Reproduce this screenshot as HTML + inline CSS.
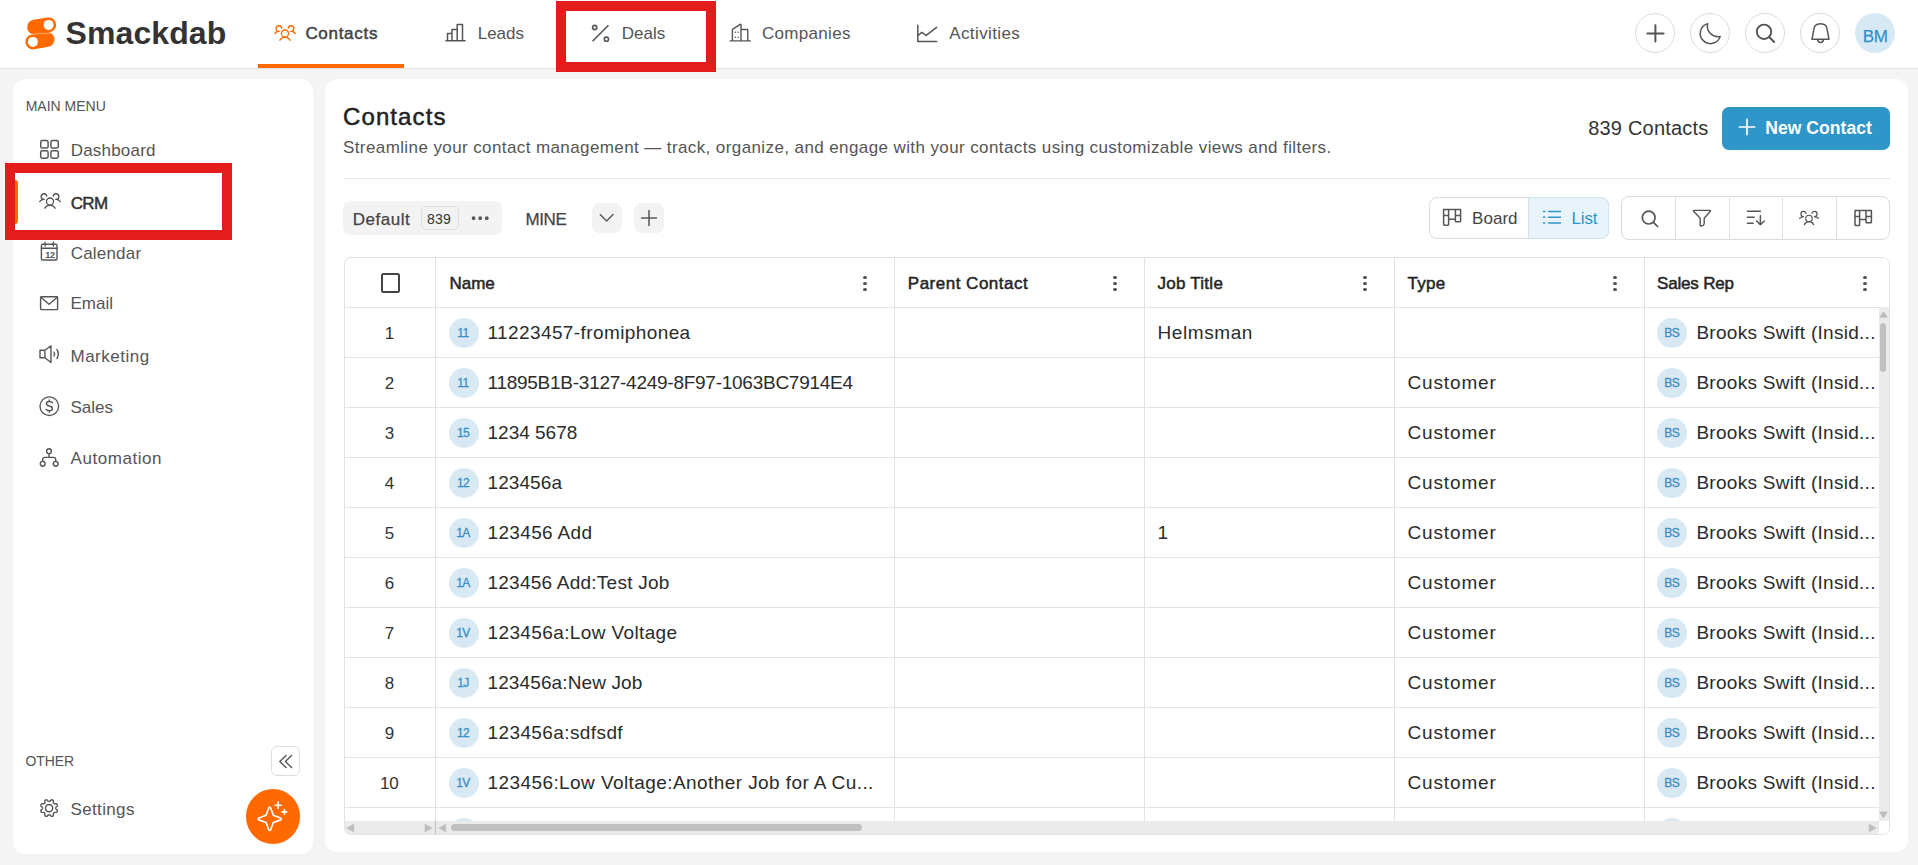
<!DOCTYPE html>
<html><head><meta charset="utf-8">
<style>
*{box-sizing:border-box;margin:0;padding:0}
html,body{width:1918px;height:865px;overflow:hidden;background:#f4f4f4;font-family:"Liberation Sans",sans-serif;color:#333}
.a{position:absolute}
.t{position:absolute;white-space:nowrap;line-height:1}
svg{position:absolute;overflow:visible}
.ic{fill:none;stroke:#555;stroke-width:1.6;stroke-linecap:round;stroke-linejoin:round}
</style></head><body>
<div class="a" style="left:0px;top:0px;width:1918px;height:68px;background:#fff;"></div>
<div class="a" style="left:0px;top:68px;width:1918px;height:1px;background:#e3e3e3;"></div>
<svg class="" style="left:20px;top:12px;" width="44" height="42" viewBox="0 0 44 42"><g stroke="#ff6a00" stroke-width="15" stroke-linecap="round" fill="none"><line x1="14.6" y1="15.2" x2="28.6" y2="12.9"/><line x1="12.9" y1="29.9" x2="27.0" y2="27.4"/></g><circle cx="28.6" cy="12.9" r="5" fill="#fff"/><circle cx="12.9" cy="29.9" r="5" fill="#fff"/><path d="M9 22.6 Q20 21.2 31 21.2" stroke="#fff" stroke-width="0.7" fill="none" opacity="0.6"/></svg>
<div class="t" style="left:65.50px;top:17.31px;font-size:32px;color:#333;font-weight:bold;letter-spacing:0.1px;">Smackdab</div>
<svg class="ic" style="left:273.5px;top:24px;stroke:#ff6a00;stroke-width:15" width="22" height="18" viewBox="4 44 248 180"><circle cx="128" cy="140" r="40"/><path d="M196,116a59.8,59.8,0,0,1,48,24"/><path d="M12,140a59.8,59.8,0,0,1,48-24"/><path d="M70.4,216a64.07,64.07,0,0,1,115.2,0"/><path d="M60,116A32,32,0,1,1,91.4,78"/><path d="M164.6,78A32,32,0,1,1,196,116"/></svg>
<div class="t" style="left:305.40px;top:25.41px;font-size:17px;color:#444;-webkit-text-stroke:0.5px #444;letter-spacing:0.7px;">Contacts</div>
<div class="a" style="left:258px;top:64px;width:146px;height:4px;background:#ff6a00;"></div>
<svg class="ic" style="left:444px;top:22px;stroke-width:1.5" width="22" height="20" viewBox="0 0 22 20"><path d="M2 18.8H21 M3.5 18.8V11.5H8 M8 18.8V7.5H13.2 M13.2 18.8V2.5H18.5V18.8"/></svg>
<div class="t" style="left:477.70px;top:25.41px;font-size:17px;color:#555;">Leads</div>
<svg class="ic" style="left:590px;top:23px;stroke-width:1.6" width="22" height="22" viewBox="0 0 22 22"><line x1="18" y1="2.8" x2="3" y2="17.8"/><circle cx="4.7" cy="4.5" r="2.1"/><circle cx="16.4" cy="16.2" r="2.1"/></svg>
<div class="t" style="left:621.80px;top:25.41px;font-size:17px;color:#555;">Deals</div>
<svg class="ic" style="left:728px;top:22px;stroke-width:1.4" width="24" height="22" viewBox="0 0 24 22"><path d="M2.2 18.9H22.4 M4.4 18.9V7.4L12.2 2.3Q13 2 13 3V18.9 M13 7.5H19.2Q19.8 7.5 19.8 8.2V18.9"/><g fill="#555" stroke="none"><circle cx="7.4" cy="10.3" r="0.75"/><circle cx="10.2" cy="10.3" r="0.75"/><circle cx="7.4" cy="15.3" r="0.75"/><circle cx="10.2" cy="15.3" r="0.75"/></g></svg>
<div class="t" style="left:762.00px;top:25.41px;font-size:17px;color:#555;letter-spacing:0.3px;">Companies</div>
<svg class="ic" style="left:915px;top:23px;stroke-width:1.5" width="24" height="21" viewBox="0 0 24 21"><path d="M2.8 2.2V18.4H21.6 M2.8 12.8L6.8 9.4L11.2 12.4L21.6 4.4"/></svg>
<div class="t" style="left:949.20px;top:25.41px;font-size:17px;color:#555;letter-spacing:0.4px;">Activities</div>
<div class="a" style="left:556px;top:1px;width:160px;height:71px;background:none;border:10px solid #e31c1c"></div>
<div class="a" style="left:1635px;top:13px;width:40px;height:40px;background:#fff;border:1px solid #dcdcdc;border-radius:50%"></div>
<div class="a" style="left:1690px;top:13px;width:40px;height:40px;background:#fff;border:1px solid #dcdcdc;border-radius:50%"></div>
<div class="a" style="left:1745px;top:13px;width:40px;height:40px;background:#fff;border:1px solid #dcdcdc;border-radius:50%"></div>
<div class="a" style="left:1800px;top:13px;width:40px;height:40px;background:#fff;border:1px solid #dcdcdc;border-radius:50%"></div>
<svg class="ic" style="left:0px;top:0px;stroke-width:2;width:1px;height:1px" width="1" height="1" viewBox="0 0 1 1"><path d="M1655.4 25.3V41.6 M1647.3 33.4H1663.6"/></svg>
<svg class="ic" style="left:0px;top:0px;stroke-width:1.5;width:1px;height:1px" width="1" height="1" viewBox="0 0 1 1"><path d="M1707.6 23.6A10.2 10.2 0 1 0 1720.2 36.4A10.7 10.7 0 0 1 1707.6 23.6Z"/></svg>
<svg class="ic" style="left:0px;top:0px;stroke-width:1.9;width:1px;height:1px" width="1" height="1" viewBox="0 0 1 1"><circle cx="1764" cy="31.8" r="7.2"/><path d="M1769.2 37L1774.2 42"/></svg>
<svg class="ic" style="left:0px;top:0px;stroke-width:1.5;width:1px;height:1px" width="1" height="1" viewBox="0 0 1 1"><path d="M1812 39.2L1813.6 31Q1813.6 23.8 1820.5 23.8Q1827.4 23.8 1827.4 31L1829 39.2Z M1817.6 39.6A2.9 2.9 0 0 0 1823.4 39.6"/></svg>
<div class="a" style="left:1855px;top:13px;width:40px;height:40px;background:#d7e9f4;border-radius:50%"></div>
<div class="t" style="left:1862.80px;top:27.61px;font-size:17px;color:#2f90c9;-webkit-text-stroke:0.25px #2f90c9;letter-spacing:-0.4px;">BM</div>
<div class="a" style="left:13px;top:79px;width:300px;height:775px;background:#fff;border-radius:12px"></div>
<div class="t" style="left:25.70px;top:99.15px;font-size:14px;color:#555;letter-spacing:0.0px;">MAIN MENU</div>
<svg class="ic" style="left:0px;top:0px;stroke-width:1.5;width:1px;height:1px" width="1" height="1" viewBox="0 0 1 1"><rect x="40.7" y="140.6" width="7.4" height="7.4" rx="1.6"/><rect x="50.9" y="140.6" width="7.4" height="7.4" rx="1.6"/><rect x="40.7" y="150.8" width="7.4" height="7.4" rx="1.6"/><rect x="50.9" y="150.8" width="7.4" height="7.4" rx="1.6"/></svg>
<div class="t" style="left:70.70px;top:142.31px;font-size:17px;color:#555;letter-spacing:0.2px;">Dashboard</div>
<svg class="ic" style="left:38.5px;top:192px;stroke:#555;stroke-width:15" width="22" height="18" viewBox="4 44 248 180"><circle cx="128" cy="140" r="40"/><path d="M196,116a59.8,59.8,0,0,1,48,24"/><path d="M12,140a59.8,59.8,0,0,1,48-24"/><path d="M70.4,216a64.07,64.07,0,0,1,115.2,0"/><path d="M60,116A32,32,0,1,1,91.4,78"/><path d="M164.6,78A32,32,0,1,1,196,116"/></svg>
<div class="a" style="left:13px;top:180px;width:5px;height:44px;background:#ff6a00;border-radius:0 3px 3px 0"></div>
<div class="t" style="left:70.70px;top:195.21px;font-size:17px;color:#333;-webkit-text-stroke:0.5px #333;letter-spacing:-0.6px;">CRM</div>
<svg class="ic" style="left:0px;top:0px;stroke-width:1.4;width:1px;height:1px" width="1" height="1" viewBox="0 0 1 1"><rect x="41.4" y="244.2" width="15.6" height="15.8" rx="1.2"/><path d="M41.4 248.2H57 M45.1 242.3V246 M53.3 242.3V246"/></svg>
<div class="t" style="left:45.30px;top:250.58px;font-size:9px;color:#555;font-weight:bold;letter-spacing:-0.3px;">12</div>
<div class="t" style="left:70.70px;top:244.61px;font-size:17px;color:#555;letter-spacing:0.2px;">Calendar</div>
<svg class="ic" style="left:0px;top:0px;stroke-width:1.4;width:1px;height:1px" width="1" height="1" viewBox="0 0 1 1"><rect x="40.6" y="296.8" width="17" height="12.8" rx="0.8"/><path d="M40.9 297.2L49.1 304.3L57.3 297.2"/></svg>
<div class="t" style="left:70.50px;top:295.21px;font-size:17px;color:#555;">Email</div>
<svg class="ic" style="left:0px;top:0px;stroke-width:1.4;width:1px;height:1px" width="1" height="1" viewBox="0 0 1 1"><path d="M40 350.3H44.9L51 345.8V362.5L44.9 357.7H40Z M44.9 350.3V357.7"/><path d="M54 352.2Q55.2 354 54 355.9 M57 349.6Q59.6 354 57 358.6"/></svg>
<div class="t" style="left:70.50px;top:347.71px;font-size:17px;color:#555;letter-spacing:0.5px;">Marketing</div>
<svg class="ic" style="left:0px;top:0px;stroke-width:1.4;width:1px;height:1px" width="1" height="1" viewBox="0 0 1 1"><circle cx="49.3" cy="406.2" r="9.3"/><path d="M52.4 402.9Q51.7 401.5 49.3 401.5Q46.4 401.5 46.4 403.6Q46.4 405.5 49.3 406Q52.4 406.5 52.4 408.6Q52.4 410.8 49.3 410.8Q46.9 410.8 46.1 409.4 M49.3 400V401.5 M49.3 410.8V412.3"/></svg>
<div class="t" style="left:70.50px;top:398.61px;font-size:17px;color:#555;">Sales</div>
<svg class="ic" style="left:0px;top:0px;stroke-width:1.4;width:1px;height:1px" width="1" height="1" viewBox="0 0 1 1"><circle cx="49" cy="451.2" r="2.4"/><circle cx="42.7" cy="463.8" r="2.4"/><circle cx="55.7" cy="463.8" r="2.4"/><path d="M49 453.6V457.4 M42.7 461.4V459.4Q42.7 457.4 44.7 457.4H53.7Q55.7 457.4 55.7 459.4V461.4"/></svg>
<div class="t" style="left:70.50px;top:449.91px;font-size:17px;color:#555;letter-spacing:0.55px;">Automation</div>
<div class="a" style="left:5px;top:163px;width:227px;height:77px;background:none;border:10px solid #e31c1c"></div>
<div class="t" style="left:25.50px;top:754.25px;font-size:14px;color:#555;letter-spacing:-0.1px;">OTHER</div>
<div class="a" style="left:270.5px;top:746px;width:29px;height:29.5px;background:#fff;border:1px solid #dedede;border-radius:6px"></div>
<svg class="ic" style="left:0px;top:0px;stroke-width:1.4;width:1px;height:1px" width="1" height="1" viewBox="0 0 1 1"><path d="M286 755.6L279.8 761.6L286 767.6 M291.6 755.6L285.4 761.6L291.6 767.6"/></svg>
<svg class="ic" style="left:0px;top:0px;stroke-width:1.4;width:1px;height:1px" width="1" height="1" viewBox="0 0 1 1"><path d="M55.80 808.10 L55.80 808.28 L55.82 808.45 L55.85 808.63 L55.91 808.82 L56.03 809.01 L56.24 809.23 L56.53 809.48 L56.87 809.75 L57.14 810.03 L57.32 810.30 L57.39 810.56 L57.40 810.80 L57.37 811.03 L57.31 811.25 L57.23 811.47 L57.13 811.68 L57.02 811.88 L56.88 812.06 L56.70 812.23 L56.47 812.35 L56.15 812.42 L55.76 812.42 L55.33 812.38 L54.95 812.35 L54.65 812.36 L54.42 812.41 L54.25 812.50 L54.10 812.60 L53.96 812.72 L53.84 812.84 L53.72 812.96 L53.60 813.10 L53.50 813.25 L53.41 813.42 L53.36 813.65 L53.35 813.95 L53.38 814.33 L53.42 814.76 L53.42 815.15 L53.35 815.47 L53.23 815.70 L53.06 815.88 L52.88 816.02 L52.68 816.13 L52.47 816.23 L52.25 816.31 L52.03 816.37 L51.80 816.40 L51.56 816.39 L51.30 816.32 L51.03 816.14 L50.75 815.87 L50.48 815.53 L50.23 815.24 L50.01 815.03 L49.82 814.91 L49.63 814.85 L49.45 814.82 L49.28 814.80 L49.10 814.80 L48.92 814.80 L48.75 814.82 L48.57 814.85 L48.38 814.91 L48.19 815.03 L47.97 815.24 L47.72 815.53 L47.45 815.87 L47.17 816.14 L46.90 816.32 L46.64 816.39 L46.40 816.40 L46.17 816.37 L45.95 816.31 L45.73 816.23 L45.52 816.13 L45.32 816.02 L45.14 815.88 L44.97 815.70 L44.85 815.47 L44.78 815.15 L44.78 814.76 L44.82 814.33 L44.85 813.95 L44.84 813.65 L44.79 813.42 L44.70 813.25 L44.60 813.10 L44.48 812.96 L44.36 812.84 L44.24 812.72 L44.10 812.60 L43.95 812.50 L43.78 812.41 L43.55 812.36 L43.25 812.35 L42.87 812.38 L42.44 812.42 L42.05 812.42 L41.73 812.35 L41.50 812.23 L41.32 812.06 L41.18 811.88 L41.07 811.68 L40.97 811.47 L40.89 811.25 L40.83 811.03 L40.80 810.80 L40.81 810.56 L40.88 810.30 L41.06 810.03 L41.33 809.75 L41.67 809.48 L41.96 809.23 L42.17 809.01 L42.29 808.82 L42.35 808.63 L42.38 808.45 L42.40 808.28 L42.40 808.10 L42.40 807.92 L42.38 807.75 L42.35 807.57 L42.29 807.38 L42.17 807.19 L41.96 806.97 L41.67 806.72 L41.33 806.45 L41.06 806.17 L40.88 805.90 L40.81 805.64 L40.80 805.40 L40.83 805.17 L40.89 804.95 L40.97 804.73 L41.07 804.52 L41.18 804.32 L41.32 804.14 L41.50 803.97 L41.73 803.85 L42.05 803.78 L42.44 803.78 L42.87 803.82 L43.25 803.85 L43.55 803.84 L43.78 803.79 L43.95 803.70 L44.10 803.60 L44.24 803.48 L44.36 803.36 L44.48 803.24 L44.60 803.10 L44.70 802.95 L44.79 802.78 L44.84 802.55 L44.85 802.25 L44.82 801.87 L44.78 801.44 L44.78 801.05 L44.85 800.73 L44.97 800.50 L45.14 800.32 L45.32 800.18 L45.52 800.07 L45.73 799.97 L45.95 799.89 L46.17 799.83 L46.40 799.80 L46.64 799.81 L46.90 799.88 L47.17 800.06 L47.45 800.33 L47.72 800.67 L47.97 800.96 L48.19 801.17 L48.38 801.29 L48.57 801.35 L48.75 801.38 L48.92 801.40 L49.10 801.40 L49.28 801.40 L49.45 801.38 L49.63 801.35 L49.82 801.29 L50.01 801.17 L50.23 800.96 L50.48 800.67 L50.75 800.33 L51.03 800.06 L51.30 799.88 L51.56 799.81 L51.80 799.80 L52.03 799.83 L52.25 799.89 L52.47 799.97 L52.68 800.07 L52.88 800.18 L53.06 800.32 L53.23 800.50 L53.35 800.73 L53.42 801.05 L53.42 801.44 L53.38 801.87 L53.35 802.25 L53.36 802.55 L53.41 802.78 L53.50 802.95 L53.60 803.10 L53.72 803.24 L53.84 803.36 L53.96 803.48 L54.10 803.60 L54.25 803.70 L54.42 803.79 L54.65 803.84 L54.95 803.85 L55.33 803.82 L55.76 803.78 L56.15 803.78 L56.47 803.85 L56.70 803.97 L56.88 804.14 L57.02 804.32 L57.13 804.52 L57.23 804.73 L57.31 804.95 L57.37 805.17 L57.40 805.40 L57.39 805.64 L57.32 805.90 L57.14 806.17 L56.87 806.45 L56.53 806.72 L56.24 806.97 L56.03 807.19 L55.91 807.38 L55.85 807.57 L55.82 807.75 L55.80 807.92Z"/><circle cx="49.1" cy="808.1" r="3.6"/></svg>
<div class="t" style="left:70.50px;top:801.11px;font-size:17px;color:#555;letter-spacing:0.35px;">Settings</div>
<div class="a" style="left:245.5px;top:789px;width:54.5px;height:54.5px;background:#ff6a00;border-radius:50%"></div>
<svg class="ic" style="left:254.6px;top:799.8px;stroke:#fff;stroke-width:12.5" width="33.6" height="33.6" viewBox="0 0 256 256"><path d="M84.27,171.73l-55.09-20.3a7.92,7.92,0,0,1,0-14.86l55.09-20.3,20.3-55.09a7.92,7.92,0,0,1,14.86,0l20.3,55.09,55.09,20.3a7.92,7.92,0,0,1,0,14.86l-55.09,20.3-20.3,55.09a7.92,7.92,0,0,1-14.86,0Z"/><path d="M176,16V64 M200,40H152 M224,72v36 M242,90H206"/></svg>
<div class="a" style="left:325px;top:79px;width:1583px;height:773px;background:#fff;border-radius:12px"></div>
<div class="t" style="left:343.00px;top:104.58px;font-size:24px;color:#222;-webkit-text-stroke:0.5px #222;letter-spacing:1.1px;">Contacts</div>
<div class="t" style="left:343.00px;top:139.11px;font-size:17px;color:#555;letter-spacing:0.4px;">Streamline your contact management — track, organize, and engage with your contacts using customizable views and filters.</div>
<div class="t" style="left:1588.20px;top:118.17px;font-size:20px;color:#333;letter-spacing:0.2px;">839 Contacts</div>
<div class="a" style="left:1722px;top:107px;width:168px;height:42.5px;background:#2e96c8;border-radius:7px"></div>
<svg class="ic" style="left:0;top:0;stroke:#fff;stroke-width:1.7;" width="1" height="1" viewBox="0 0 1 1"><path d="M1747 119.4V134.6 M1739.4 127H1754.6"/></svg>
<div class="t" style="left:1765.30px;top:120.19px;font-size:17.5px;color:#fff;font-weight:bold;letter-spacing:0.05px;">New Contact</div>
<div class="a" style="left:343px;top:178px;width:1547px;height:1px;background:#e6e6e6;"></div>
<div class="a" style="left:343px;top:201px;width:159px;height:34px;background:#f3f3f3;border-radius:8px"></div>
<div class="t" style="left:352.80px;top:210.61px;font-size:17px;color:#444;-webkit-text-stroke:0.25px #444;letter-spacing:0.5px;">Default</div>
<div class="a" style="left:421px;top:206px;width:37.5px;height:23.5px;background:#f3f3f3;border:1px solid #e0e0e0;border-radius:5px"></div>
<div class="t" style="left:427.00px;top:211.95px;font-size:14px;color:#333;letter-spacing:0.2px;">839</div>
<svg class="ic" style="left:0;top:0;stroke:#555;stroke-width:1.6;fill:#555" width="1" height="1" viewBox="0 0 1 1"><circle cx="473.6" cy="218.2" r="1.1"/><circle cx="480.2" cy="218.2" r="1.1"/><circle cx="486.8" cy="218.2" r="1.1"/></svg>
<div class="t" style="left:525.50px;top:210.51px;font-size:17px;color:#444;-webkit-text-stroke:0.25px #444;letter-spacing:-0.4px;">MINE</div>
<div class="a" style="left:592px;top:203px;width:30px;height:30px;background:#f3f3f3;border-radius:7px"></div>
<svg class="ic" style="left:0;top:0;stroke:#555;stroke-width:1.4;" width="1" height="1" viewBox="0 0 1 1"><path d="M600.2 214.6L606.6 221L613 214.6"/></svg>
<div class="a" style="left:634px;top:203px;width:30px;height:30px;background:#f3f3f3;border-radius:7px"></div>
<svg class="ic" style="left:0;top:0;stroke:#555;stroke-width:1.5;" width="1" height="1" viewBox="0 0 1 1"><path d="M649 210.6V225.4 M641.6 218H656.4"/></svg>
<div class="a" style="left:1429px;top:197px;width:180px;height:42px;background:#fff;border:1px solid #dcdcdc;border-radius:8px"></div>
<div class="a" style="left:1528px;top:197px;width:81px;height:42px;background:#e9f4fa;border:1px solid #cfe4f1;border-radius:0 8px 8px 0"></div>
<svg class="ic" style="left:0;top:0;stroke:#555;stroke-width:1.5;" width="1" height="1" viewBox="0 0 1 1"><path d="M1443.6 209.4H1460.6V221.2Q1460.6 221.79999999999998 1459.8 221.79999999999998H1456.2Q1455.4 221.79999999999998 1455.4 221.2V209.4 M1443.6 209.4V224.6Q1443.6 225.2 1444.3999999999999 225.2H1447.8Q1448.6 225.2 1448.6 224.6V209.4 M1448.6 219.3H1455.4 M1443.6 215.4H1448.6 M1455.4 215.4H1460.6"/></svg>
<div class="t" style="left:1472.00px;top:210.41px;font-size:17px;color:#444;letter-spacing:0.05px;">Board</div>
<svg class="ic" style="left:0;top:0;stroke:#2e96c8;stroke-width:1.6;" width="1" height="1" viewBox="0 0 1 1"><path d="M1543.6 211.5H1544.8 M1543.6 217.2H1544.8 M1543.6 223H1544.8 M1548.6 211.5H1560.4 M1548.6 217.2H1560.4 M1548.6 223H1560.4"/></svg>
<div class="t" style="left:1571.40px;top:210.41px;font-size:17px;color:#2e96c8;letter-spacing:-0.1px;">List</div>
<div class="a" style="left:1621px;top:196px;width:269px;height:44px;background:#fff;border:1px solid #dcdcdc;border-radius:8px"></div>
<div class="a" style="left:1675px;top:197px;width:1px;height:42px;background:#dedede;"></div>
<div class="a" style="left:1729px;top:197px;width:1px;height:42px;background:#dedede;"></div>
<div class="a" style="left:1782px;top:197px;width:1px;height:42px;background:#dedede;"></div>
<div class="a" style="left:1836px;top:197px;width:1px;height:42px;background:#dedede;"></div>
<svg class="ic" style="left:0;top:0;stroke:#555;stroke-width:1.7;" width="1" height="1" viewBox="0 0 1 1"><circle cx="1648.7" cy="217.6" r="6.4"/><path d="M1653.4 222.3L1657.6 226.5"/></svg>
<svg class="ic" style="left:0;top:0;stroke:#555;stroke-width:1.4;" width="1" height="1" viewBox="0 0 1 1"><path d="M1694 210.4H1710Q1711 210.4 1710.3 211.3L1704.2 218.2V223.6Q1704.2 224.6 1703 225.3L1701.4 226Q1700.2 226.4 1700.2 225.2V218.2L1693.6 211.3Q1693 210.4 1694 210.4Z"/></svg>
<svg class="ic" style="left:0;top:0;stroke:#555;stroke-width:1.5;" width="1" height="1" viewBox="0 0 1 1"><path d="M1747.4 211.2H1760.4 M1747.4 217.2H1754.2 M1747.4 223.2H1753.2 M1760.4 215.8V224.8 M1756.6 221L1760.4 224.8L1764.2 221"/></svg>
<svg class="ic" style="left:1799px;top:210px;stroke:#555;stroke-width:15" width="20" height="16" viewBox="4 44 248 180"><circle cx="128" cy="140" r="40"/><path d="M196,116a59.8,59.8,0,0,1,48,24"/><path d="M12,140a59.8,59.8,0,0,1,48-24"/><path d="M70.4,216a64.07,64.07,0,0,1,115.2,0"/><path d="M60,116A32,32,0,1,1,91.4,78"/><path d="M164.6,78A32,32,0,1,1,196,116"/></svg>
<svg class="ic" style="left:0;top:0;stroke:#555;stroke-width:1.5;" width="1" height="1" viewBox="0 0 1 1"><path d="M1855 210.6H1871.4V222.2Q1871.4 222.79999999999998 1870.6000000000001 222.79999999999998H1866.8Q1866 222.79999999999998 1866 222.2V210.6 M1855 210.6V225Q1855 225.6 1855.8 225.6H1858.8Q1859.6 225.6 1859.6 225V210.6 M1859.6 219.6H1866 M1855 216.4H1859.6 M1866 216.4H1871.4"/></svg>
<div class="a" style="left:344px;top:257px;width:1546px;height:578px;background:#fff;border:1px solid #e3e3e3;border-radius:7px"></div>
<div class="a" style="left:345px;top:258px;width:1544px;height:563px;overflow:hidden">
<div class="a" style="left:0px;top:48.5px;width:1534px;height:1px;background:#e3e3e3;"></div>
<div class="a" style="left:90px;top:0px;width:1px;height:563px;background:#e3e3e3;"></div>
<div class="a" style="left:549px;top:0px;width:1px;height:563px;background:#e3e3e3;"></div>
<div class="a" style="left:799px;top:0px;width:1px;height:563px;background:#e3e3e3;"></div>
<div class="a" style="left:1049px;top:0px;width:1px;height:563px;background:#e3e3e3;"></div>
<div class="a" style="left:1299px;top:0px;width:1px;height:563px;background:#e3e3e3;"></div>
<div class="a" style="left:36.2px;top:15.4px;width:19px;height:19.6px;background:#fff;border:2px solid #444;border-radius:2.5px"></div>
<div class="t" style="left:104.50px;top:17.21px;font-size:17px;color:#252525;-webkit-text-stroke:0.5px #252525;letter-spacing:-0.05px;">Name</div>
<div class="t" style="left:562.80px;top:17.21px;font-size:17px;color:#252525;-webkit-text-stroke:0.5px #252525;letter-spacing:0.5px;">Parent Contact</div>
<div class="t" style="left:812.40px;top:17.21px;font-size:17px;color:#252525;-webkit-text-stroke:0.5px #252525;letter-spacing:0.27px;">Job Title</div>
<div class="t" style="left:1062.50px;top:17.21px;font-size:17px;color:#252525;-webkit-text-stroke:0.5px #252525;letter-spacing:0.3px;">Type</div>
<div class="t" style="left:1312.10px;top:17.21px;font-size:17px;color:#252525;-webkit-text-stroke:0.5px #252525;letter-spacing:-0.2px;">Sales Rep</div>
<div class="a" style="left:518.4px;top:17.6px;width:3.2px;height:3.2px;background:#555;border-radius:50%"></div>
<div class="a" style="left:518.4px;top:23.8px;width:3.2px;height:3.2px;background:#555;border-radius:50%"></div>
<div class="a" style="left:518.4px;top:30.0px;width:3.2px;height:3.2px;background:#555;border-radius:50%"></div>
<div class="a" style="left:768.4px;top:17.6px;width:3.2px;height:3.2px;background:#555;border-radius:50%"></div>
<div class="a" style="left:768.4px;top:23.8px;width:3.2px;height:3.2px;background:#555;border-radius:50%"></div>
<div class="a" style="left:768.4px;top:30.0px;width:3.2px;height:3.2px;background:#555;border-radius:50%"></div>
<div class="a" style="left:1018.4px;top:17.6px;width:3.2px;height:3.2px;background:#555;border-radius:50%"></div>
<div class="a" style="left:1018.4px;top:23.8px;width:3.2px;height:3.2px;background:#555;border-radius:50%"></div>
<div class="a" style="left:1018.4px;top:30.0px;width:3.2px;height:3.2px;background:#555;border-radius:50%"></div>
<div class="a" style="left:1268.4px;top:17.6px;width:3.2px;height:3.2px;background:#555;border-radius:50%"></div>
<div class="a" style="left:1268.4px;top:23.8px;width:3.2px;height:3.2px;background:#555;border-radius:50%"></div>
<div class="a" style="left:1268.4px;top:30.0px;width:3.2px;height:3.2px;background:#555;border-radius:50%"></div>
<div class="a" style="left:1518.4px;top:17.6px;width:3.2px;height:3.2px;background:#555;border-radius:50%"></div>
<div class="a" style="left:1518.4px;top:23.8px;width:3.2px;height:3.2px;background:#555;border-radius:50%"></div>
<div class="a" style="left:1518.4px;top:30.0px;width:3.2px;height:3.2px;background:#555;border-radius:50%"></div>
<div class="a" style="left:0px;top:99px;width:1534px;height:1px;background:#e3e3e3;"></div>
<div class="t" style="left:39.85px;top:66.71px;font-size:17px;color:#333;">1</div>
<div class="a" style="left:104px;top:60px;width:30px;height:30px;background:#d8e9f4;border-radius:50%"></div>
<div class="t" style="left:103px;top:60px;width:30px;height:30px;line-height:31px;text-align:center;font-size:12px;color:#3a8ec4;letter-spacing:-0.6px;-webkit-text-stroke:0.3px #3a8ec4">11</div>
<div class="t" style="left:142.50px;top:65.12px;font-size:19px;color:#2b2b2b;letter-spacing:0.4px;">11223457-fromiphonea</div>
<div class="t" style="left:812.40px;top:65.12px;font-size:19px;color:#2b2b2b;letter-spacing:0.6px;">Helmsman</div>
<div class="a" style="left:1312px;top:60.2px;width:29.5px;height:29.5px;background:#d8e9f4;border-radius:50%"></div>
<div class="t" style="left:1312px;top:60.19999999999999px;width:29.5px;height:29.5px;line-height:31px;text-align:center;font-size:12px;color:#3a8ec4;letter-spacing:-0.4px;-webkit-text-stroke:0.3px #3a8ec4">BS</div>
<div class="t" style="left:1351.40px;top:65.12px;font-size:19px;color:#2b2b2b;letter-spacing:0.28px;">Brooks Swift (Insid...</div>
<div class="a" style="left:0px;top:149px;width:1534px;height:1px;background:#e3e3e3;"></div>
<div class="t" style="left:39.85px;top:116.71px;font-size:17px;color:#333;">2</div>
<div class="a" style="left:104px;top:110px;width:30px;height:30px;background:#d8e9f4;border-radius:50%"></div>
<div class="t" style="left:103px;top:110px;width:30px;height:30px;line-height:31px;text-align:center;font-size:12px;color:#3a8ec4;letter-spacing:-0.6px;-webkit-text-stroke:0.3px #3a8ec4">11</div>
<div class="t" style="left:142.50px;top:115.12px;font-size:19px;color:#2b2b2b;letter-spacing:-0.26px;">11895B1B-3127-4249-8F97-1063BC7914E4</div>
<div class="t" style="left:1062.50px;top:115.12px;font-size:19px;color:#2b2b2b;letter-spacing:0.85px;">Customer</div>
<div class="a" style="left:1312px;top:110.2px;width:29.5px;height:29.5px;background:#d8e9f4;border-radius:50%"></div>
<div class="t" style="left:1312px;top:110.19999999999999px;width:29.5px;height:29.5px;line-height:31px;text-align:center;font-size:12px;color:#3a8ec4;letter-spacing:-0.4px;-webkit-text-stroke:0.3px #3a8ec4">BS</div>
<div class="t" style="left:1351.40px;top:115.12px;font-size:19px;color:#2b2b2b;letter-spacing:0.28px;">Brooks Swift (Insid...</div>
<div class="a" style="left:0px;top:199px;width:1534px;height:1px;background:#e3e3e3;"></div>
<div class="t" style="left:39.85px;top:166.71px;font-size:17px;color:#333;">3</div>
<div class="a" style="left:104px;top:160px;width:30px;height:30px;background:#d8e9f4;border-radius:50%"></div>
<div class="t" style="left:103px;top:160px;width:30px;height:30px;line-height:31px;text-align:center;font-size:12px;color:#3a8ec4;letter-spacing:-0.6px;-webkit-text-stroke:0.3px #3a8ec4">15</div>
<div class="t" style="left:142.50px;top:165.12px;font-size:19px;color:#2b2b2b;letter-spacing:0.0px;">1234 5678</div>
<div class="t" style="left:1062.50px;top:165.12px;font-size:19px;color:#2b2b2b;letter-spacing:0.85px;">Customer</div>
<div class="a" style="left:1312px;top:160.2px;width:29.5px;height:29.5px;background:#d8e9f4;border-radius:50%"></div>
<div class="t" style="left:1312px;top:160.2px;width:29.5px;height:29.5px;line-height:31px;text-align:center;font-size:12px;color:#3a8ec4;letter-spacing:-0.4px;-webkit-text-stroke:0.3px #3a8ec4">BS</div>
<div class="t" style="left:1351.40px;top:165.12px;font-size:19px;color:#2b2b2b;letter-spacing:0.28px;">Brooks Swift (Insid...</div>
<div class="a" style="left:0px;top:249px;width:1534px;height:1px;background:#e3e3e3;"></div>
<div class="t" style="left:39.85px;top:216.71px;font-size:17px;color:#333;">4</div>
<div class="a" style="left:104px;top:210px;width:30px;height:30px;background:#d8e9f4;border-radius:50%"></div>
<div class="t" style="left:103px;top:210px;width:30px;height:30px;line-height:31px;text-align:center;font-size:12px;color:#3a8ec4;letter-spacing:-0.6px;-webkit-text-stroke:0.3px #3a8ec4">12</div>
<div class="t" style="left:142.50px;top:215.12px;font-size:19px;color:#2b2b2b;letter-spacing:0.08px;">123456a</div>
<div class="t" style="left:1062.50px;top:215.12px;font-size:19px;color:#2b2b2b;letter-spacing:0.85px;">Customer</div>
<div class="a" style="left:1312px;top:210.2px;width:29.5px;height:29.5px;background:#d8e9f4;border-radius:50%"></div>
<div class="t" style="left:1312px;top:210.2px;width:29.5px;height:29.5px;line-height:31px;text-align:center;font-size:12px;color:#3a8ec4;letter-spacing:-0.4px;-webkit-text-stroke:0.3px #3a8ec4">BS</div>
<div class="t" style="left:1351.40px;top:215.12px;font-size:19px;color:#2b2b2b;letter-spacing:0.28px;">Brooks Swift (Insid...</div>
<div class="a" style="left:0px;top:299px;width:1534px;height:1px;background:#e3e3e3;"></div>
<div class="t" style="left:39.85px;top:266.71px;font-size:17px;color:#333;">5</div>
<div class="a" style="left:104px;top:260px;width:30px;height:30px;background:#d8e9f4;border-radius:50%"></div>
<div class="t" style="left:103px;top:260px;width:30px;height:30px;line-height:31px;text-align:center;font-size:12px;color:#3a8ec4;letter-spacing:-0.6px;-webkit-text-stroke:0.3px #3a8ec4">1A</div>
<div class="t" style="left:142.50px;top:265.12px;font-size:19px;color:#2b2b2b;letter-spacing:0.35px;">123456 Add</div>
<div class="t" style="left:812.40px;top:265.12px;font-size:19px;color:#2b2b2b;letter-spacing:0.6px;">1</div>
<div class="t" style="left:1062.50px;top:265.12px;font-size:19px;color:#2b2b2b;letter-spacing:0.85px;">Customer</div>
<div class="a" style="left:1312px;top:260.2px;width:29.5px;height:29.5px;background:#d8e9f4;border-radius:50%"></div>
<div class="t" style="left:1312px;top:260.20000000000005px;width:29.5px;height:29.5px;line-height:31px;text-align:center;font-size:12px;color:#3a8ec4;letter-spacing:-0.4px;-webkit-text-stroke:0.3px #3a8ec4">BS</div>
<div class="t" style="left:1351.40px;top:265.12px;font-size:19px;color:#2b2b2b;letter-spacing:0.28px;">Brooks Swift (Insid...</div>
<div class="a" style="left:0px;top:349px;width:1534px;height:1px;background:#e3e3e3;"></div>
<div class="t" style="left:39.85px;top:316.71px;font-size:17px;color:#333;">6</div>
<div class="a" style="left:104px;top:310px;width:30px;height:30px;background:#d8e9f4;border-radius:50%"></div>
<div class="t" style="left:103px;top:310px;width:30px;height:30px;line-height:31px;text-align:center;font-size:12px;color:#3a8ec4;letter-spacing:-0.6px;-webkit-text-stroke:0.3px #3a8ec4">1A</div>
<div class="t" style="left:142.50px;top:315.12px;font-size:19px;color:#2b2b2b;letter-spacing:0.24px;">123456 Add:Test Job</div>
<div class="t" style="left:1062.50px;top:315.12px;font-size:19px;color:#2b2b2b;letter-spacing:0.85px;">Customer</div>
<div class="a" style="left:1312px;top:310.2px;width:29.5px;height:29.5px;background:#d8e9f4;border-radius:50%"></div>
<div class="t" style="left:1312px;top:310.20000000000005px;width:29.5px;height:29.5px;line-height:31px;text-align:center;font-size:12px;color:#3a8ec4;letter-spacing:-0.4px;-webkit-text-stroke:0.3px #3a8ec4">BS</div>
<div class="t" style="left:1351.40px;top:315.12px;font-size:19px;color:#2b2b2b;letter-spacing:0.28px;">Brooks Swift (Insid...</div>
<div class="a" style="left:0px;top:399px;width:1534px;height:1px;background:#e3e3e3;"></div>
<div class="t" style="left:39.85px;top:366.71px;font-size:17px;color:#333;">7</div>
<div class="a" style="left:104px;top:360px;width:30px;height:30px;background:#d8e9f4;border-radius:50%"></div>
<div class="t" style="left:103px;top:360px;width:30px;height:30px;line-height:31px;text-align:center;font-size:12px;color:#3a8ec4;letter-spacing:-0.6px;-webkit-text-stroke:0.3px #3a8ec4">1V</div>
<div class="t" style="left:142.50px;top:365.12px;font-size:19px;color:#2b2b2b;letter-spacing:0.38px;">123456a:Low Voltage</div>
<div class="t" style="left:1062.50px;top:365.12px;font-size:19px;color:#2b2b2b;letter-spacing:0.85px;">Customer</div>
<div class="a" style="left:1312px;top:360.2px;width:29.5px;height:29.5px;background:#d8e9f4;border-radius:50%"></div>
<div class="t" style="left:1312px;top:360.20000000000005px;width:29.5px;height:29.5px;line-height:31px;text-align:center;font-size:12px;color:#3a8ec4;letter-spacing:-0.4px;-webkit-text-stroke:0.3px #3a8ec4">BS</div>
<div class="t" style="left:1351.40px;top:365.12px;font-size:19px;color:#2b2b2b;letter-spacing:0.28px;">Brooks Swift (Insid...</div>
<div class="a" style="left:0px;top:449px;width:1534px;height:1px;background:#e3e3e3;"></div>
<div class="t" style="left:39.85px;top:416.71px;font-size:17px;color:#333;">8</div>
<div class="a" style="left:104px;top:410px;width:30px;height:30px;background:#d8e9f4;border-radius:50%"></div>
<div class="t" style="left:103px;top:410px;width:30px;height:30px;line-height:31px;text-align:center;font-size:12px;color:#3a8ec4;letter-spacing:-0.6px;-webkit-text-stroke:0.3px #3a8ec4">1J</div>
<div class="t" style="left:142.50px;top:415.12px;font-size:19px;color:#2b2b2b;letter-spacing:0.12px;">123456a:New Job</div>
<div class="t" style="left:1062.50px;top:415.12px;font-size:19px;color:#2b2b2b;letter-spacing:0.85px;">Customer</div>
<div class="a" style="left:1312px;top:410.2px;width:29.5px;height:29.5px;background:#d8e9f4;border-radius:50%"></div>
<div class="t" style="left:1312px;top:410.20000000000005px;width:29.5px;height:29.5px;line-height:31px;text-align:center;font-size:12px;color:#3a8ec4;letter-spacing:-0.4px;-webkit-text-stroke:0.3px #3a8ec4">BS</div>
<div class="t" style="left:1351.40px;top:415.12px;font-size:19px;color:#2b2b2b;letter-spacing:0.28px;">Brooks Swift (Insid...</div>
<div class="a" style="left:0px;top:499px;width:1534px;height:1px;background:#e3e3e3;"></div>
<div class="t" style="left:39.85px;top:466.71px;font-size:17px;color:#333;">9</div>
<div class="a" style="left:104px;top:460px;width:30px;height:30px;background:#d8e9f4;border-radius:50%"></div>
<div class="t" style="left:103px;top:460px;width:30px;height:30px;line-height:31px;text-align:center;font-size:12px;color:#3a8ec4;letter-spacing:-0.6px;-webkit-text-stroke:0.3px #3a8ec4">12</div>
<div class="t" style="left:142.50px;top:465.12px;font-size:19px;color:#2b2b2b;letter-spacing:0.4px;">123456a:sdfsdf</div>
<div class="t" style="left:1062.50px;top:465.12px;font-size:19px;color:#2b2b2b;letter-spacing:0.85px;">Customer</div>
<div class="a" style="left:1312px;top:460.2px;width:29.5px;height:29.5px;background:#d8e9f4;border-radius:50%"></div>
<div class="t" style="left:1312px;top:460.20000000000005px;width:29.5px;height:29.5px;line-height:31px;text-align:center;font-size:12px;color:#3a8ec4;letter-spacing:-0.4px;-webkit-text-stroke:0.3px #3a8ec4">BS</div>
<div class="t" style="left:1351.40px;top:465.12px;font-size:19px;color:#2b2b2b;letter-spacing:0.28px;">Brooks Swift (Insid...</div>
<div class="a" style="left:0px;top:549px;width:1534px;height:1px;background:#e3e3e3;"></div>
<div class="t" style="left:35.10px;top:516.71px;font-size:17px;color:#333;letter-spacing:-0.4px;">10</div>
<div class="a" style="left:104px;top:510px;width:30px;height:30px;background:#d8e9f4;border-radius:50%"></div>
<div class="t" style="left:103px;top:510px;width:30px;height:30px;line-height:31px;text-align:center;font-size:12px;color:#3a8ec4;letter-spacing:-0.6px;-webkit-text-stroke:0.3px #3a8ec4">1V</div>
<div class="t" style="left:142.50px;top:515.12px;font-size:19px;color:#2b2b2b;letter-spacing:0.42px;">123456:Low Voltage:Another Job for A Cu...</div>
<div class="t" style="left:1062.50px;top:515.12px;font-size:19px;color:#2b2b2b;letter-spacing:0.85px;">Customer</div>
<div class="a" style="left:1312px;top:510.2px;width:29.5px;height:29.5px;background:#d8e9f4;border-radius:50%"></div>
<div class="t" style="left:1312px;top:510.20000000000005px;width:29.5px;height:29.5px;line-height:31px;text-align:center;font-size:12px;color:#3a8ec4;letter-spacing:-0.4px;-webkit-text-stroke:0.3px #3a8ec4">BS</div>
<div class="t" style="left:1351.40px;top:515.12px;font-size:19px;color:#2b2b2b;letter-spacing:0.28px;">Brooks Swift (Insid...</div>
<div class="a" style="left:104px;top:560px;width:30px;height:30px;background:#d8e9f4;border-radius:50%"></div>
<div class="a" style="left:1312px;top:560.2px;width:29.5px;height:29.5px;background:#d8e9f4;border-radius:50%"></div>
<div class="a" style="left:1534px;top:49px;width:10px;height:514px;background:#ebebeb;"></div>
<svg class="ic" style="left:0;top:0;stroke:#bdbdbd;stroke-width:0.5;fill:#bdbdbd" width="1" height="1" viewBox="0 0 1 1"><path d="M1534.6 59.30000000000001L1538.5 53.60000000000002L1542.4 59.30000000000001Z"/></svg>
<svg class="ic" style="left:0;top:0;stroke:#bdbdbd;stroke-width:0.5;fill:#bdbdbd" width="1" height="1" viewBox="0 0 1 1"><path d="M1534.6 554.1L1538.5 559.9L1542.4 554.1Z"/></svg>
<div class="a" style="left:1534.6px;top:64.8px;width:6.4px;height:49px;background:#c1c1c1;border-radius:3.2px"></div>
</div>
<div class="a" style="left:345px;top:821px;width:1534px;height:13.2px;background:#ebebeb;border-radius:0 0 0 6px"></div>
<div class="a" style="left:435px;top:821px;width:1px;height:13.2px;background:#b9c2cb;"></div>
<svg class="ic" style="left:0;top:0;stroke:#bdbdbd;stroke-width:0.6;fill:#bdbdbd" width="1" height="1" viewBox="0 0 1 1"><path d="M347 828L353.8 824.2V831.8Z M431.8 828L425 824.2V831.8Z M439 828L445.8 824.2V831.8Z M1876 828L1869.2 824.2V831.8Z"/></svg>
<div class="a" style="left:451px;top:824px;width:411px;height:7.2px;background:#c1c1c1;border-radius:3.6px"></div>
</body></html>
